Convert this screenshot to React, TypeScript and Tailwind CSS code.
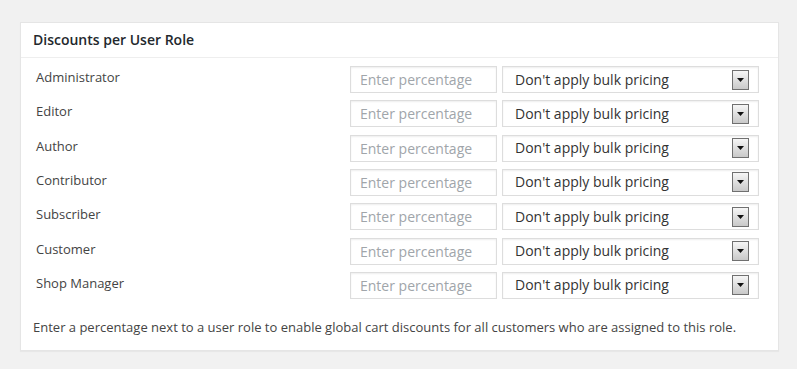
const roles = ['Administrator', 'Editor', 'Author', 'Contributor', 'Subscriber', 'Customer', 'Shop Manager']

function FakeSelect() {
  return (
    <div className="flex items-center justify-between w-[257px] h-[27px] bg-white border border-[#dddddd] shadow-[inset_0_1px_2px_rgba(0,0,0,0.07)] pl-[12px] pr-[9px]">
      <span className="text-[14px] text-[#333] leading-none">Don't apply bulk pricing</span>
      <div className="flex items-center justify-center w-[17px] h-[20px] border border-[#707070] bg-gradient-to-b from-[#f6f6f6] to-[#c9c9c9]">
        <svg width="7" height="4" viewBox="0 0 7 4"><path d="M0 0h7L3.5 4z" fill="#111" /></svg>
      </div>
    </div>
  )
}

export default function App() {
  return (
    <div className="w-[797px] h-[369px] bg-[#f1f1f1] pt-[22px] px-[20px] font-['Open_Sans',sans-serif] antialiased">
      <div className="w-[759px] h-[329px] bg-white border border-[#e5e5e5] shadow-[0_1px_1px_rgba(0,0,0,0.04)]">
        <div className="h-[35px] border-b border-[#eeeeee] pl-[12px] flex items-center">
          <h3 className="text-[14px] font-semibold text-[#23282d] leading-none">Discounts per User Role</h3>
        </div>
        <div className="pt-[8px] pl-[15px]">
          {roles.map(r => (
            <div key={r} className="flex h-[34.33px]">
              <div className="w-[314px] pt-[2px] text-[13px] text-[#444] leading-[18px]">{r}</div>
              <input
                placeholder="Enter percentage"
                className="w-[147px] h-[27px] border border-[#dddddd] shadow-[inset_0_1px_2px_rgba(0,0,0,0.07)] px-[9px] text-[14px] text-[#333] placeholder:text-[#a0a5aa] outline-none"
              />
              <div className="ml-[5px]"><FakeSelect /></div>
            </div>
          ))}
        </div>
        <p className="mt-[12px] pl-[12px] text-[13px] text-[#444] leading-[18px]">
          Enter a percentage next to a user role to enable global cart discounts for all customers who are assigned to this role.
        </p>
      </div>
    </div>
  )
}
